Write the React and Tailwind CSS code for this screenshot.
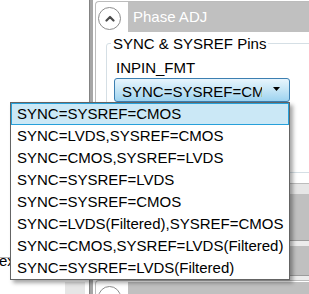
import React from "react";

const items = [
  "SYNC=SYSREF=CMOS",
  "SYNC=LVDS,SYSREF=CMOS",
  "SYNC=CMOS,SYSREF=LVDS",
  "SYNC=SYSREF=LVDS",
  "SYNC=SYSREF=CMOS",
  "SYNC=LVDS(Filtered),SYSREF=CMOS",
  "SYNC=CMOS,SYSREF=LVDS(Filtered)",
  "SYNC=SYSREF=LVDS(Filtered)",
];

function Circle() {
  return (
    <div className="w-[23px] h-[23px] shrink-0 rounded-full border border-[#8c8c8c] bg-white flex items-center justify-center">
      <svg width="10" height="7" viewBox="0 0 10 7">
        <polyline points="1.5,5.5 5,2 8.5,5.5" fill="none" stroke="#4a4a4a" strokeWidth="2.2" strokeLinecap="round" strokeLinejoin="round" />
      </svg>
    </div>
  );
}

export default function App() {
  return (
    <div
      className="relative w-[309px] h-[294px] overflow-hidden bg-white flex text-[15px] text-black"
      style={{ fontFamily: '"Liberation Sans", Arial, sans-serif' }}
    >
      {/* left column */}
      <div className="w-[89px] shrink-0 flex flex-col">
        <div className="h-[259px]" />
        <div className="h-px bg-[#b4b4b4]" />
        <div className="h-[21px] leading-[6px] pt-0 -ml-[1px] whitespace-nowrap">ex</div>
        <div className="ml-[26px] border-t border-[#d4d4d4] flex">
          <div className="ml-auto mr-[4px] mt-[2px] w-[20px] h-[12px] bg-[#e6e6e6]" />
        </div>
      </div>

      {/* splitter */}
      <div className="w-[4px] shrink-0 bg-[#a6a6a6] border-l border-[#838383]" />
      <div className="w-[2px] shrink-0" />

      {/* right area */}
      <div className="flex-1 overflow-hidden flex flex-col">
        {/* Panel 1 */}
        <div className="mt-[1px] w-[240px] h-[183px] shrink-0 border-l border-t border-b border-[#bcbcbc] rounded-tl-[4px] flex flex-col">
          <div className="h-[30px] flex items-start shrink-0">
            <div className="ml-[2px] mt-[5px]">
              <Circle />
            </div>
            <div className="ml-[7px] flex-1 h-[30px] bg-[#c0c0c0] text-white leading-[30px] pl-[5px] whitespace-nowrap">
              Phase ADJ
            </div>
          </div>
          <fieldset className="ml-[10px] mt-[3px] w-[225px] h-[138px] border border-[#d5dfe5] rounded-[3px] p-0 m-0">
            <legend className="ml-[4px] px-[2px] leading-[17px] whitespace-nowrap">SYNC &amp; SYSREF Pins</legend>
            <div className="pl-[7px] flex flex-col">
              <div className="mt-[7px] ml-[2px] leading-[17px]">INPIN_FMT</div>
              <div className="mt-[2px] w-[176px] h-[24px] border border-[#3c7fb1] rounded-[3px] bg-linear-to-b from-[#e8f5fd] via-[#c4e5f6] to-[#9dd3f0] flex items-start">
                <div className="ml-[7px] mt-[4px] w-[140px] overflow-hidden whitespace-nowrap leading-[17px]">
                  SYNC=SYSREF=CMOS
                </div>
                <svg className="ml-[11px] mt-[8px]" width="7" height="4" viewBox="0 0 7 4">
                  <polygon points="0,0 7,0 3.5,4" fill="#000" />
                </svg>
              </div>
            </div>
          </fieldset>
        </div>
        <div className="h-[10px] shrink-0 bg-[#e6e6e6]" />
        <div className="h-[46px] shrink-0 bg-[#c0c0c0]" />
        <div className="h-px shrink-0 bg-[#9c9c9c]" />
        <div className="h-[5px] shrink-0 bg-[#ececec]" />
        <div className="h-[29px] shrink-0 bg-[#c0c0c0]" />
        <div className="h-px shrink-0 bg-[#9c9c9c]" />
        <div className="h-[4px] shrink-0 bg-[#ececec]" />
        {/* Panel 4 */}
        <div className="w-[240px] h-[40px] shrink-0 border-l border-t border-[#bcbcbc] rounded-tl-[4px] bg-white flex items-start">
          <div className="ml-[2px] mt-[5px]">
            <Circle />
          </div>
          <div className="ml-[7px] flex-1 h-[30px] mt-[1px] bg-[#c0c0c0]" />
        </div>
      </div>

      {/* dropdown list */}
      <div className="absolute left-[10px] top-[102px] w-[280px] border border-[#646464] bg-white shadow-[3px_3px_4px_rgba(0,0,0,0.35)] flex flex-col">
        {items.map((t, i) => (
          <div
            key={i}
            className={
              i === 0
                ? "h-[22px] border border-[#26a0da] bg-[#cbe8f6] pl-[5px] leading-[20px] whitespace-nowrap"
                : "h-[22px] border border-transparent pl-[5px] leading-[20px] whitespace-nowrap"
            }
          >
            {t}
          </div>
        ))}
      </div>
    </div>
  );
}
